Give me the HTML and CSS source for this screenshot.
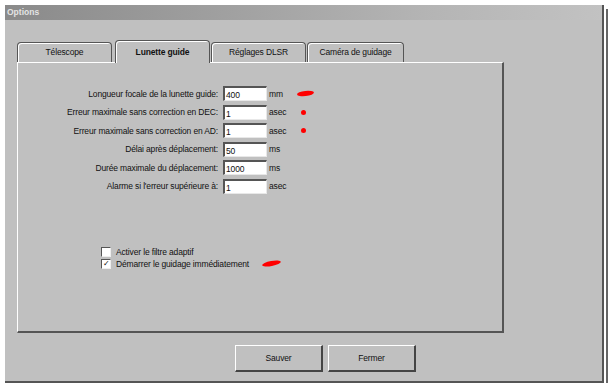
FILE: index.html
```html
<!DOCTYPE html>
<html lang="fr">
<head>
  <meta charset="UTF-8" />
  <title>Options</title>
  <link rel="stylesheet" href="styles.css">
</head>
<body>

  <div class="window">
    <div class="titlebar">Options</div>

    <div class="content">
      <div class="tabs">
        <div class="tab">Télescope</div>
        <div class="tab active">Lunette guide</div>
        <div class="tab">Réglages DLSR</div>
        <div class="tab wide">Caméra de guidage</div>
      </div>

      <div class="panel">
        <div class="form">
          <label>Longueur focale de la lunette guide:</label>
          <div class="field">400</div>
          <span class="unit">mm</span>
          <span class="mark"><span class="stroke"></span></span>

          <label>Erreur maximale sans correction en DEC:</label>
          <div class="field">1</div>
          <span class="unit">asec</span>
          <span class="mark"><span class="dot"></span></span>

          <label>Erreur maximale sans correction en AD:</label>
          <div class="field">1</div>
          <span class="unit">asec</span>
          <span class="mark"><span class="dot"></span></span>

          <label>Délai après déplacement:</label>
          <div class="field">50</div>
          <span class="unit">ms</span>
          <span class="mark"></span>

          <label>Durée maximale du déplacement:</label>
          <div class="field">1000</div>
          <span class="unit">ms</span>
          <span class="mark"></span>

          <label>Alarme si l'erreur supérieure à:</label>
          <div class="field">1</div>
          <span class="unit">asec</span>
          <span class="mark"></span>
        </div>

        <div class="checks">
          <div class="check"><span class="box"></span>Activer le filtre adaptif</div>
          <div class="check"><span class="box checked">✓</span>Démarrer le guidage immédiatement<span class="stroke low"></span></div>
        </div>
      </div>

      <div class="buttons">
        <button>Sauver</button>
        <button>Fermer</button>
      </div>
    </div>
  </div>

</body>
</html>
```

FILE: styles.css
```css
body {
  margin: 0;
  padding: 0;
  background-color: #fff;
  font-family: "Liberation Sans", Arial, sans-serif;
  font-size: 8.5px;
  letter-spacing: -0.15px;
  color: #111;
}
.window {
  margin: 5px 0 0 5px;
  width: 597px;
  height: 376px;
  background-color: #c0c0c0;
  border-right: 2px solid #555;
  border-bottom: 2px solid #555;
  box-shadow: 2px 2px 0 0 #fff, 4px 4px 0 0 #666;
}
.titlebar {
  height: 15px;
  line-height: 15px;
  padding-left: 2px;
  background: linear-gradient(to right, #8a8a8a, #b4b4b4 70%, #c2c2c2);
  color: #e4e4e4;
  font-weight: bold;
  letter-spacing: 0;
}
.content {
  padding: 20px 0 0 12px;
}
.tabs {
  display: flex;
  align-items: flex-end;
  height: 22px;
}
.tab {
  box-sizing: border-box;
  width: 95px;
  height: 20px;
  margin-right: 1px;
  border: 1px solid #555;
  border-bottom: none;
  border-radius: 4px 4px 0 0;
  box-shadow: inset 1px 1px 0 #fff;
  text-align: center;
  line-height: 19px;
}
.tab:first-child {
  margin-right: 3px;
}
.tab.active {
  height: 23px;
  margin-bottom: -1px;
  position: relative;
  z-index: 1;
  background-color: #c0c0c0;
  font-weight: bold;
  line-height: 22px;
}
.tab.wide {
  width: 97px;
}
.panel {
  box-sizing: border-box;
  width: 487px;
  height: 271px;
  border-top: 1px solid #fff;
  border-left: 1px solid #fff;
  border-right: 2px solid #555;
  border-bottom: 2px solid #555;
  padding-top: 23px;
}
.form {
  display: grid;
  grid-template-columns: 200px 44px 26px 40px;
  grid-auto-rows: 15px;
  row-gap: 3.6px;
  align-items: center;
}
.form label {
  text-align: right;
}
.field {
  box-sizing: border-box;
  height: 15px;
  margin-left: 5px;
  width: 44px;
  background-color: #fff;
  border-top: 2px solid #555;
  border-left: 2px solid #555;
  border-right: 1px solid #e8e8e8;
  border-bottom: 1px solid #e8e8e8;
  padding: 2px 0 0 1px;
  line-height: 11px;
}
.unit {
  padding-left: 7px;
}
.mark {
  display: flex;
  align-items: center;
}
.stroke {
  display: inline-block;
  width: 17px;
  height: 5px;
  background-color: #f00;
  border-radius: 50%;
  transform: rotate(-6deg);
  margin-left: 9px;
}
.dot {
  display: inline-block;
  width: 5px;
  height: 5px;
  background-color: #f00;
  border-radius: 50%;
  margin-left: 13px;
}
.checks {
  margin: 52px 0 0 83px;
}
.check {
  display: flex;
  align-items: center;
  height: 12px;
}
.box {
  box-sizing: border-box;
  width: 10px;
  height: 10px;
  margin-right: 5px;
  background-color: #fff;
  border-top: 1px solid #555;
  border-left: 1px solid #555;
  border-right: 1px solid #eee;
  border-bottom: 1px solid #eee;
  font-size: 8px;
  line-height: 8px;
  text-align: center;
  letter-spacing: 0;
}
.stroke.low {
  width: 19px;
  margin-left: 13px;
  transform: rotate(-10deg);
}
.buttons {
  display: flex;
  gap: 5px;
  margin: 12px 0 0 218px;
}
.buttons button {
  box-sizing: border-box;
  width: 88px;
  height: 27px;
  background-color: #c0c0c0;
  border-top: 1px solid #fff;
  border-left: 1px solid #fff;
  border-right: 2px solid #444;
  border-bottom: 2px solid #444;
  font-family: "Liberation Sans", Arial, sans-serif;
  font-size: 8.5px;
  letter-spacing: -0.15px;
  color: #111;
}
```
